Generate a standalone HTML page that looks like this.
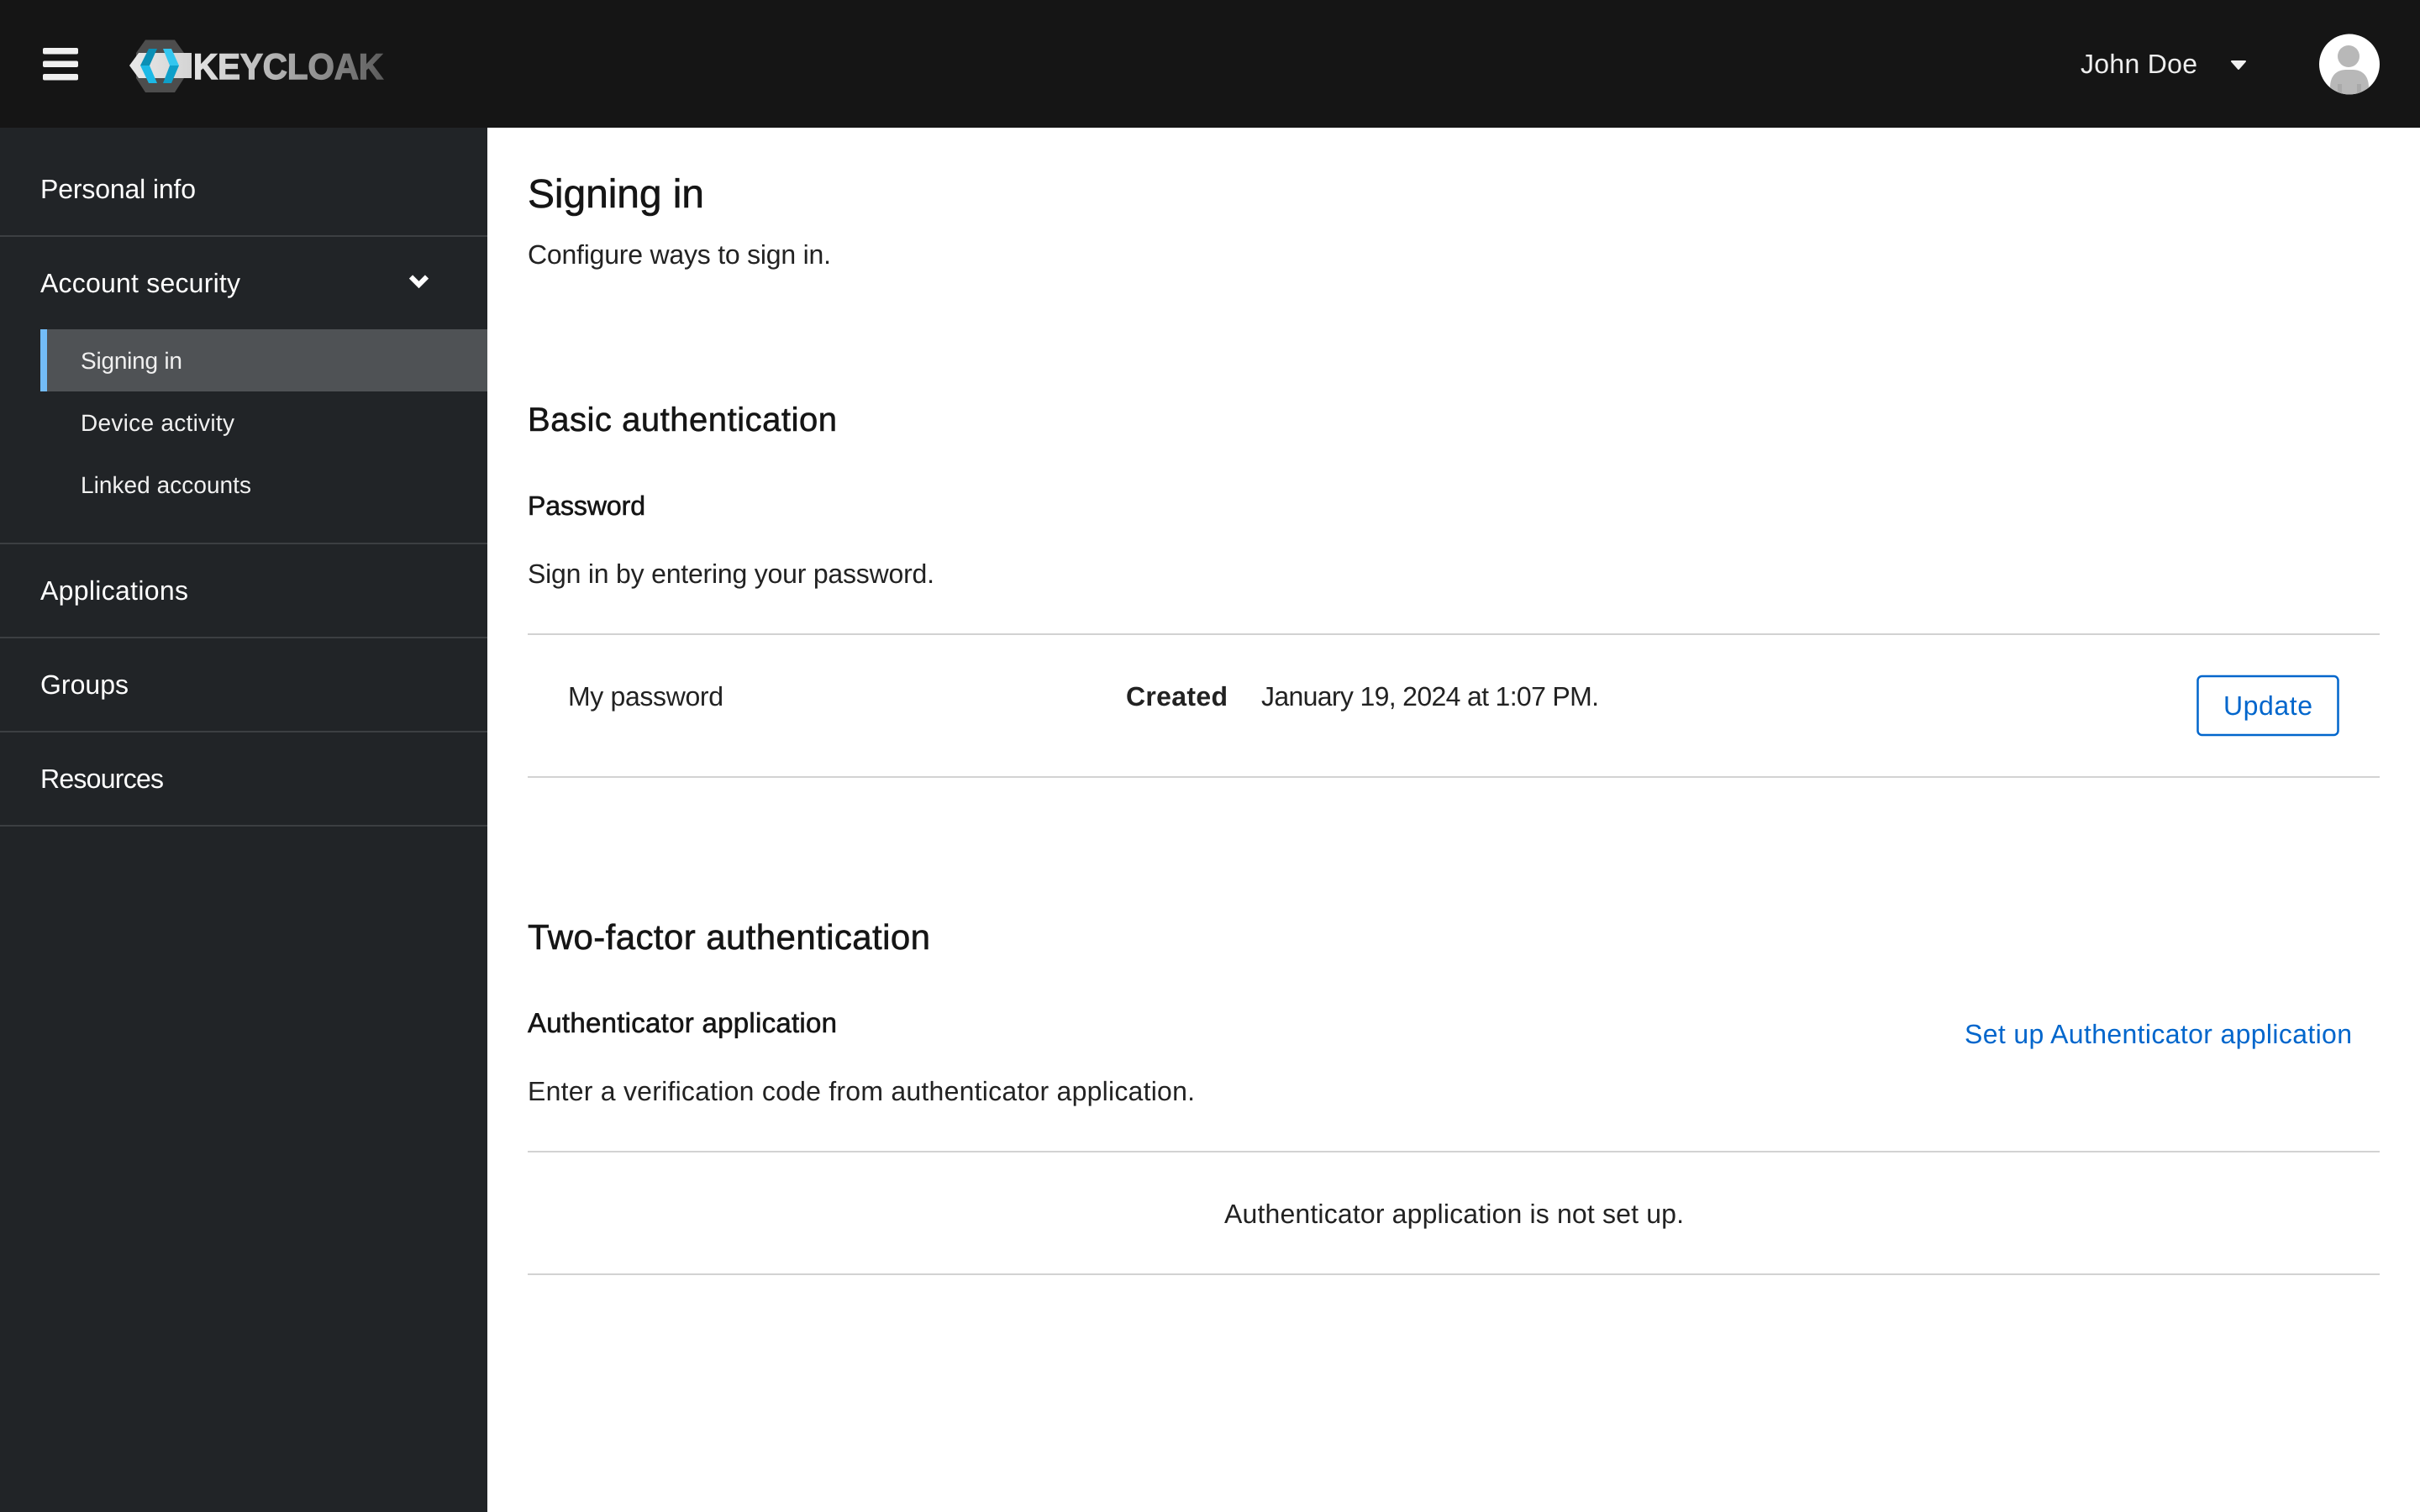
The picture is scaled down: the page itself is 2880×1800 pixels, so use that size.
<!DOCTYPE html>
<html lang="en">
<head>
<meta charset="utf-8">
<title>Signing in</title>
<style>
html,body{margin:0;padding:0;width:2880px;height:1800px;overflow:hidden;background:#fff}
svg{display:block;position:absolute;left:0;top:0}
text{font-family:"Liberation Sans",Arial,sans-serif;text-rendering:geometricPrecision}
.nav{fill:#fff;font-size:32px}
.sub{fill:#f0f0f0;font-size:28px}
.b{fill:#222;font-size:32px}
.h{fill:#151515;stroke:#151515;stroke-width:.6px}
</style>
</head>
<body>
<svg width="2880" height="1800" viewBox="0 0 2880 1800" xmlns="http://www.w3.org/2000/svg">
<defs>
<linearGradient id="kc" gradientUnits="userSpaceOnUse" x1="230" y1="0" x2="456" y2="0">
<stop offset="0" stop-color="#e6e6e6"/><stop offset=".3" stop-color="#c4c4c4"/><stop offset=".6" stop-color="#9a9a9a"/><stop offset="1" stop-color="#5c5c5c"/>
</linearGradient>
<linearGradient id="band" gradientUnits="userSpaceOnUse" x1="154" y1="0" x2="228" y2="0">
<stop offset="0" stop-color="#e8e8e8"/><stop offset="1" stop-color="#d4d4d4"/>
</linearGradient>
<clipPath id="av"><circle cx="2796" cy="76.5" r="36"/></clipPath>
</defs>

<!-- header -->
<rect x="0" y="0" width="2880" height="152" fill="#151515"/>
<rect x="51" y="57" width="42" height="7.5" rx="2" fill="#f0f0f0"/>
<rect x="51" y="72.5" width="42" height="7.5" rx="2" fill="#f0f0f0"/>
<rect x="51" y="88" width="42" height="7.5" rx="2" fill="#f0f0f0"/>

<!-- logo -->
<polygon points="173,47.5 208,47.5 219,63 219,93 208,110 173,110 162,93 162,63" fill="#4d4d4d"/>
<polygon points="154,78 165,63 228,63 228,93 165,93" fill="url(#band)"/>
<polygon points="167,78 177,58 187,58 178,78" fill="#0a8fb5"/>
<polygon points="167,78 178,78 187,99 177,99" fill="#1cb9e6"/>
<polygon points="194,58 204,58 213,78 202,78" fill="#33c6ef"/>
<polygon points="202,78 213,78 204,99 194,99" fill="#0e9fc9"/>
<text x="230" y="94" font-size="43" font-weight="700" fill="url(#kc)" stroke="url(#kc)" stroke-width="1.4" textLength="226" lengthAdjust="spacingAndGlyphs">KEYCLOAK</text>

<!-- user -->
<text x="2476" y="87" font-size="32" fill="#eeeeee" textLength="139" lengthAdjust="spacing">John Doe</text>
<polygon points="2656,73 2672,73 2664,82" fill="#f0f0f0" stroke="#f0f0f0" stroke-width="2" stroke-linejoin="round"/>
<circle cx="2796" cy="76.5" r="36" fill="#fff"/>
<g clip-path="url(#av)">
<circle cx="2795" cy="67" r="13" fill="#b8b8b8"/>
<path d="M2773 113 V104 C2773 90 2781 83 2792 83 H2800 C2811 83 2819 90 2819 104 V113 Z" fill="#b8b8b8"/>
<path d="M2782 113 V100 h5 V113 Z M2805 113 V100 h5 V113 Z" fill="#a9a9a9"/>
</g>

<!-- sidebar -->
<rect x="0" y="152" width="580" height="1648" fill="#212427"/>
<rect x="0" y="280" width="580" height="2" fill="#3c3f42"/>
<rect x="0" y="646" width="580" height="2" fill="#3c3f42"/>
<rect x="0" y="758" width="580" height="2" fill="#3c3f42"/>
<rect x="0" y="870" width="580" height="2" fill="#3c3f42"/>
<rect x="0" y="982" width="580" height="2" fill="#3c3f42"/>
<rect x="48" y="392" width="532" height="74" fill="#4f5255"/>
<rect x="48" y="392" width="8" height="74" fill="#73bcf7"/>
<text class="nav" x="48" y="236" textLength="185" lengthAdjust="spacing">Personal info</text>
<text class="nav" x="48" y="348" textLength="238" lengthAdjust="spacing">Account security</text>
<polyline points="489,329.5 498.5,339 508,329.5" fill="none" stroke="#fff" stroke-width="6"/>
<text class="sub" x="96" y="439" textLength="121" lengthAdjust="spacing">Signing in</text>
<text class="sub" x="96" y="513" textLength="183" lengthAdjust="spacing">Device activity</text>
<text class="sub" x="96" y="587" textLength="203" lengthAdjust="spacing">Linked accounts</text>
<text class="nav" x="48" y="714" textLength="176" lengthAdjust="spacing">Applications</text>
<text class="nav" x="48" y="826" textLength="105" lengthAdjust="spacing">Groups</text>
<text class="nav" x="48" y="938" textLength="147" lengthAdjust="spacing">Resources</text>

<!-- main -->
<text class="h" x="628" y="247" font-size="48" textLength="210" lengthAdjust="spacing">Signing in</text>
<text class="b" x="628" y="314" textLength="361" lengthAdjust="spacing">Configure ways to sign in.</text>

<text class="h" x="628" y="513" font-size="40" textLength="368" lengthAdjust="spacing">Basic authentication</text>
<text class="h" x="628" y="613" font-size="32" textLength="140" lengthAdjust="spacing">Password</text>
<text class="b" x="628" y="694" textLength="484" lengthAdjust="spacing">Sign in by entering your password.</text>

<rect x="628" y="754" width="2204" height="2" fill="#d2d2d2"/>
<text class="b" x="676" y="840" textLength="185" lengthAdjust="spacing">My password</text>
<text class="b" x="1340" y="840" font-weight="700" textLength="121" lengthAdjust="spacing">Created</text>
<text class="b" x="1501" y="840" textLength="402" lengthAdjust="spacing">January 19, 2024 at 1:07 PM.</text>
<rect x="2615.5" y="805" width="167" height="70" rx="5" fill="#fff" stroke="#0066cc" stroke-width="2.5"/>
<text x="2646" y="851" font-size="32" fill="#0066cc" textLength="106" lengthAdjust="spacing">Update</text>
<rect x="628" y="924" width="2204" height="2" fill="#d2d2d2"/>

<text class="h" x="628" y="1130" font-size="42" textLength="479" lengthAdjust="spacing">Two-factor authentication</text>
<text class="h" x="628" y="1229" font-size="33" textLength="368" lengthAdjust="spacing">Authenticator application</text>
<text x="2338" y="1242" font-size="32" fill="#0066cc" textLength="461" lengthAdjust="spacing">Set up Authenticator application</text>
<text class="b" x="628" y="1310" font-size="32" textLength="794" lengthAdjust="spacing">Enter a verification code from authenticator application.</text>

<rect x="628" y="1370" width="2204" height="2" fill="#d2d2d2"/>
<text class="b" x="1457" y="1456" textLength="547" lengthAdjust="spacing">Authenticator application is not set up.</text>
<rect x="628" y="1516" width="2204" height="2" fill="#d2d2d2"/>
</svg>
</body>
</html>
